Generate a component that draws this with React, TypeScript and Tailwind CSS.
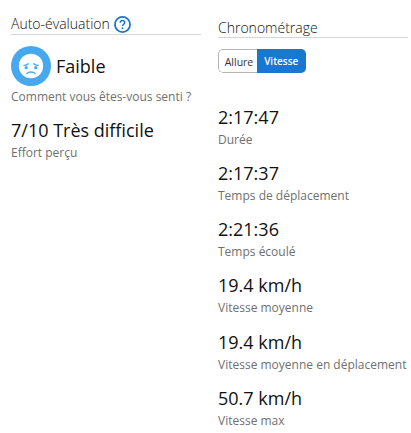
import React from "react";

const stats = [
  ["2:17:47", "Durée"],
  ["2:17:37", "Temps de déplacement"],
  ["2:21:36", "Temps écoulé"],
  ["19.4 km/h", "Vitesse moyenne"],
  ["19.4 km/h", "Vitesse moyenne en déplacement"],
  ["50.7 km/h", "Vitesse max"],
];

function Stat({ value, label }: { value: string; label: string }) {
  return (
    <div className="h-[56.15px] whitespace-nowrap">
      <div className="pb-0.5 text-[18px] leading-[22px] text-[#111]">{value}</div>
      <div className="text-[12px] leading-5 text-[#707070]">{label}</div>
    </div>
  );
}

function HelpIcon() {
  return (
    <svg width="17" height="17" viewBox="0 0 16 16" fill="none" stroke="#1976d2">
      <circle cx="8" cy="8" r="7.1" strokeWidth="1.7" />
      <path d="M5.9 6.3c0-1.3.9-2 2.1-2s2.1.8 2.1 1.9c0 1.5-2.1 1.6-2.1 3.2" strokeWidth="1.4" />
      <circle cx="8" cy="11.5" r=".9" fill="#1976d2" stroke="none" />
    </svg>
  );
}

function SadFace() {
  return (
    <svg width="40" height="40" viewBox="0 0 40 40" fill="none" className="shrink-0">
      <circle cx="20" cy="20" r="20" fill="#46a8ee" />
      <circle cx="20" cy="20" r="12.2" fill="#fff" />
      <g stroke="#46a8ee" strokeLinecap="round" strokeWidth="1.3">
        <path d="M12.9 19.3c1.8.1 3.4-.5 4.4-1.6M27.1 19.3c-1.8.1-3.4-.5-4.4-1.6" />
        <path d="M15.9 27.7c1.6-2.3 6.6-2.3 8.2 0" />
      </g>
      <circle cx="15.2" cy="21.7" r="1.6" fill="#46a8ee" />
      <circle cx="24.8" cy="21.7" r="1.6" fill="#46a8ee" />
    </svg>
  );
}

export default function App() {
  return (
    <main className="flex h-[433px] w-[411px] overflow-hidden bg-white pl-[11px] font-['Open_Sans',sans-serif] text-[#111]">
      <section className="w-[190px] shrink-0 pt-[13px]">
        <h2 className="flex h-[22px] items-center gap-1 border-b border-[#d5d5d5] text-[14px] font-light">
          <span>Auto-évaluation</span>
          <span className="relative top-px"><HelpIcon /></span>
        </h2>
        <div className="mt-[11px] flex items-center gap-[5px] text-[18px]">
          <SadFace />
          <span>Faible</span>
        </div>
        <div className="mt-px text-[12px] leading-5 text-[#707070]">Comment vous êtes-vous senti ?</div>
        <div className="mt-3">
          <Stat value="7/10 Très difficile" label="Effort perçu" />
        </div>
      </section>
      <section className="ml-[17px] w-[190px] shrink-0 pt-[17px]">
        <h2 className="h-[21px] border-b border-[#d5d5d5] text-[14px] leading-[22px] font-light">Chronométrage</h2>
        <div className="mt-[11px] flex h-6 w-[87.5px] overflow-hidden rounded-[5px] leading-6">
          <button className="flex w-[39px] items-center justify-center rounded-l-[5px] border border-r-0 border-[#b5b5b5] pt-px pl-0.5 text-[10.5px] text-[#333]">Allure</button>
          <button className="flex w-[48.5px] items-center justify-center bg-[#1976d2] text-[10px] font-semibold text-white">Vitesse</button>
        </div>
        <div className="mt-[33px]">
          {stats.map(([value, label]) => (
            <Stat key={label} value={value} label={label} />
          ))}
        </div>
      </section>
    </main>
  );
}
